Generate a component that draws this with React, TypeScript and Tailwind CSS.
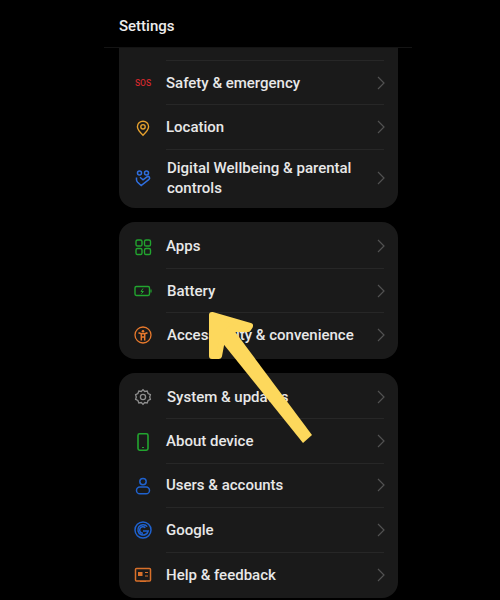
import React, {FC, ReactNode} from 'react';

interface RowProps {
    icon: ReactNode,
    label: ReactNode,
    height?: string,
    divider?: boolean,
    shift?: boolean
}

const Chevron: FC = () => (
    <svg width="8" height="14" viewBox="0 0 8 14" fill="none" stroke="#525252" strokeWidth="1.2" className="shrink-0">
        <path d="M1 1l6 6-6 6"/>
    </svg>
);

const Icon: FC<{color: string, children: ReactNode, width?: number}> = ({color, children, width = 1.4}) => (
    <svg width="20" height="20" viewBox="0 0 20 20" fill="none" stroke={color} strokeWidth={width}>
        {children}
    </svg>
);

const Row: FC<RowProps> = ({icon, label, height = 'h-[44.4px]', divider = true, shift = false}) => (
    <div className={`flex items-center ${height} pl-[14px] pr-[14px]`}>
        <div className="w-[20px] flex justify-center shrink-0">{icon}</div>
        <div className={`flex-1 self-stretch flex items-center justify-between ml-[13px] ${divider ? 'border-b border-[#272727]' : ''}`}>
            <div className={`${shift ? 'pl-[1px]' : ''} text-[15px] leading-[20px] font-medium text-[#e8e8e8]`}>{label}</div>
            <div className="mr-[-1px]"><Chevron/></div>
        </div>
    </div>
);

const Arrow: FC = () => (
    <svg className="absolute left-0 top-0" width="500" height="600" viewBox="0 0 500 600" fill="#fdd85c">
        <path d="M212 315 L250 326 L248 329 L230 329 L222 340 L219 356 L212 356 Z" stroke="#fdd85c" strokeWidth="6" strokeLinejoin="round"/>
        <path d="M233 329 L312 435 L303 443 L221 341 Z"/>
    </svg>
);

export default function App() {
    return (
        <div className="relative w-[500px] h-[600px] overflow-hidden bg-black" style={{fontFamily: 'Roboto, sans-serif'}}>
            <div className="h-[48px] ml-[104px] w-[308px] border-b border-[#141414] pl-[15px] pt-[16px] text-[15px] leading-[20px] font-medium text-[#ececec]">
                Settings
            </div>
            <div className="flex flex-col gap-[14px] pl-[119px] pr-[102px]">
                <div className="bg-[#1a1a1a] rounded-b-[16px] h-[160px]">
                    <div className="h-[13px] ml-[47px] mr-[14px] border-b border-[#272727]"/>
                    <Row icon={<span className="text-[8.5px] leading-none font-medium text-[#d0282c]">SOS</span>} label="Safety & emergency"/>
                    <Row
                        icon={
                            <Icon color="#e6a12e">
                                <path d="M10 17.2c-3.4-3.2-5.6-5.6-5.6-8.4a5.6 5.6 0 0 1 11.2 0c0 2.8-2.2 5.2-5.6 8.4z"/>
                                <circle cx="10" cy="8.8" r="2.2"/>
                            </Icon>
                        }
                        label="Location"
                    />
                    <Row
                        height="h-[57px]"
                        divider={false}
                        shift
                        icon={
                            <Icon color="#2f6fe0" width={1.5}>
                                <circle cx="6.5" cy="5" r="2"/>
                                <circle cx="13.5" cy="5" r="2"/>
                                <path d="M3.5 9.5v2.2c0 1 .4 1.8 1.1 2.5l3.6 3.3 7.8-6.2a1.6 1.6 0 0 0-2-2.5l-4 3.1-3-2.6"/>
                            </Icon>
                        }
                        label={<>Digital Wellbeing &amp; parental<br/>controls</>}
                    />
                </div>

                <div className="bg-[#1a1a1a] rounded-[16px] h-[137px] pt-[2.5px]">
                    <Row
                        icon={
                            <Icon color="#22a52f">
                                <rect x="3" y="3" width="6" height="6" rx="1.6"/>
                                <rect x="11.5" y="3" width="6" height="6" rx="1.6"/>
                                <rect x="3" y="11.5" width="6" height="6" rx="1.6"/>
                                <rect x="11.5" y="11.5" width="6" height="6" rx="1.6"/>
                            </Icon>
                        }
                        label="Apps"
                    />
                    <Row
                        shift
                        icon={
                            <Icon color="#22a52f">
                                <rect x="2" y="5.5" width="14.5" height="9" rx="1.4"/>
                                <path d="M18 8.5v3" strokeWidth="1.2"/>
                                <path d="M10 7.5l-2 3h2.4l-2 2.2" strokeWidth="1"/>
                            </Icon>
                        }
                        label="Battery"
                    />
                    <Row
                        divider={false}
                        shift
                        icon={
                            <Icon color="#e8792c" width={1.3}>
                                <circle cx="10" cy="10" r="8"/>
                                <circle cx="10" cy="6.3" r="1.3" fill="#e8792c" stroke="none"/>
                                <path d="M5.5 7.8c3 1.3 6 1.3 9 0M8.3 9v6.5M11.7 9v6.5M8.3 12h3.4" strokeWidth="1.5"/>
                            </Icon>
                        }
                        label="Accessibility & convenience"
                    />
                </div>

                <div className="bg-[#1a1a1a] rounded-[16px] h-[225px] pt-[2px]">
                    <Row
                        shift
                        icon={
                            <Icon color="#8f8f8f" width={1.3}>
                                <path d="M10 2.6l1.7 1.9 2.5-.4.9 2.4 2.3 1.1-.7 2.4.7 2.4-2.3 1.1-.9 2.4-2.5-.4L10 17.4l-1.7-1.9-2.5.4-.9-2.4-2.3-1.1.7-2.4-.7-2.4 2.3-1.1.9-2.4 2.5.4z"/>
                                <circle cx="10" cy="10" r="2.6"/>
                            </Icon>
                        }
                        label="System & updates"
                    />
                    <Row
                        icon={
                            <Icon color="#22a52f" width={1.6}>
                                <rect x="5" y="1.8" width="10" height="16.4" rx="1.6"/>
                                <path d="M9 15.5h2" strokeWidth="1"/>
                            </Icon>
                        }
                        label="About device"
                    />
                    <Row
                        icon={
                            <Icon color="#1f62cf" width={1.5}>
                                <circle cx="10" cy="5.6" r="3.2"/>
                                <rect x="3.5" y="11" width="13" height="6.8" rx="3.4"/>
                            </Icon>
                        }
                        label="Users & accounts"
                    />
                    <Row
                        icon={
                            <Icon color="#1f62cf" width={1.5}>
                                <circle cx="10" cy="10" r="8"/>
                                <path d="M14.2 6.6a5.2 5.2 0 1 0 1 4.4H10"/>
                                <path d="M10 13.3a3.3 3.3 0 1 1 2.3-5.6"/>
                            </Icon>
                        }
                        label="Google"
                    />
                    <Row
                        divider={false}
                        icon={
                            <Icon color="#d9702a" width={1.5}>
                                <rect x="2.5" y="3.5" width="15" height="12.5" rx="1"/>
                                <path d="M12 7.5h3M12 11h3M7 16.5h6" strokeWidth="1.2"/>
                                <rect x="5" y="7" width="4.5" height="4" fill="#d9702a" stroke="none"/>
                            </Icon>
                        }
                        label="Help & feedback"
                    />
                </div>
            </div>
            <Arrow/>
        </div>
    );
}
